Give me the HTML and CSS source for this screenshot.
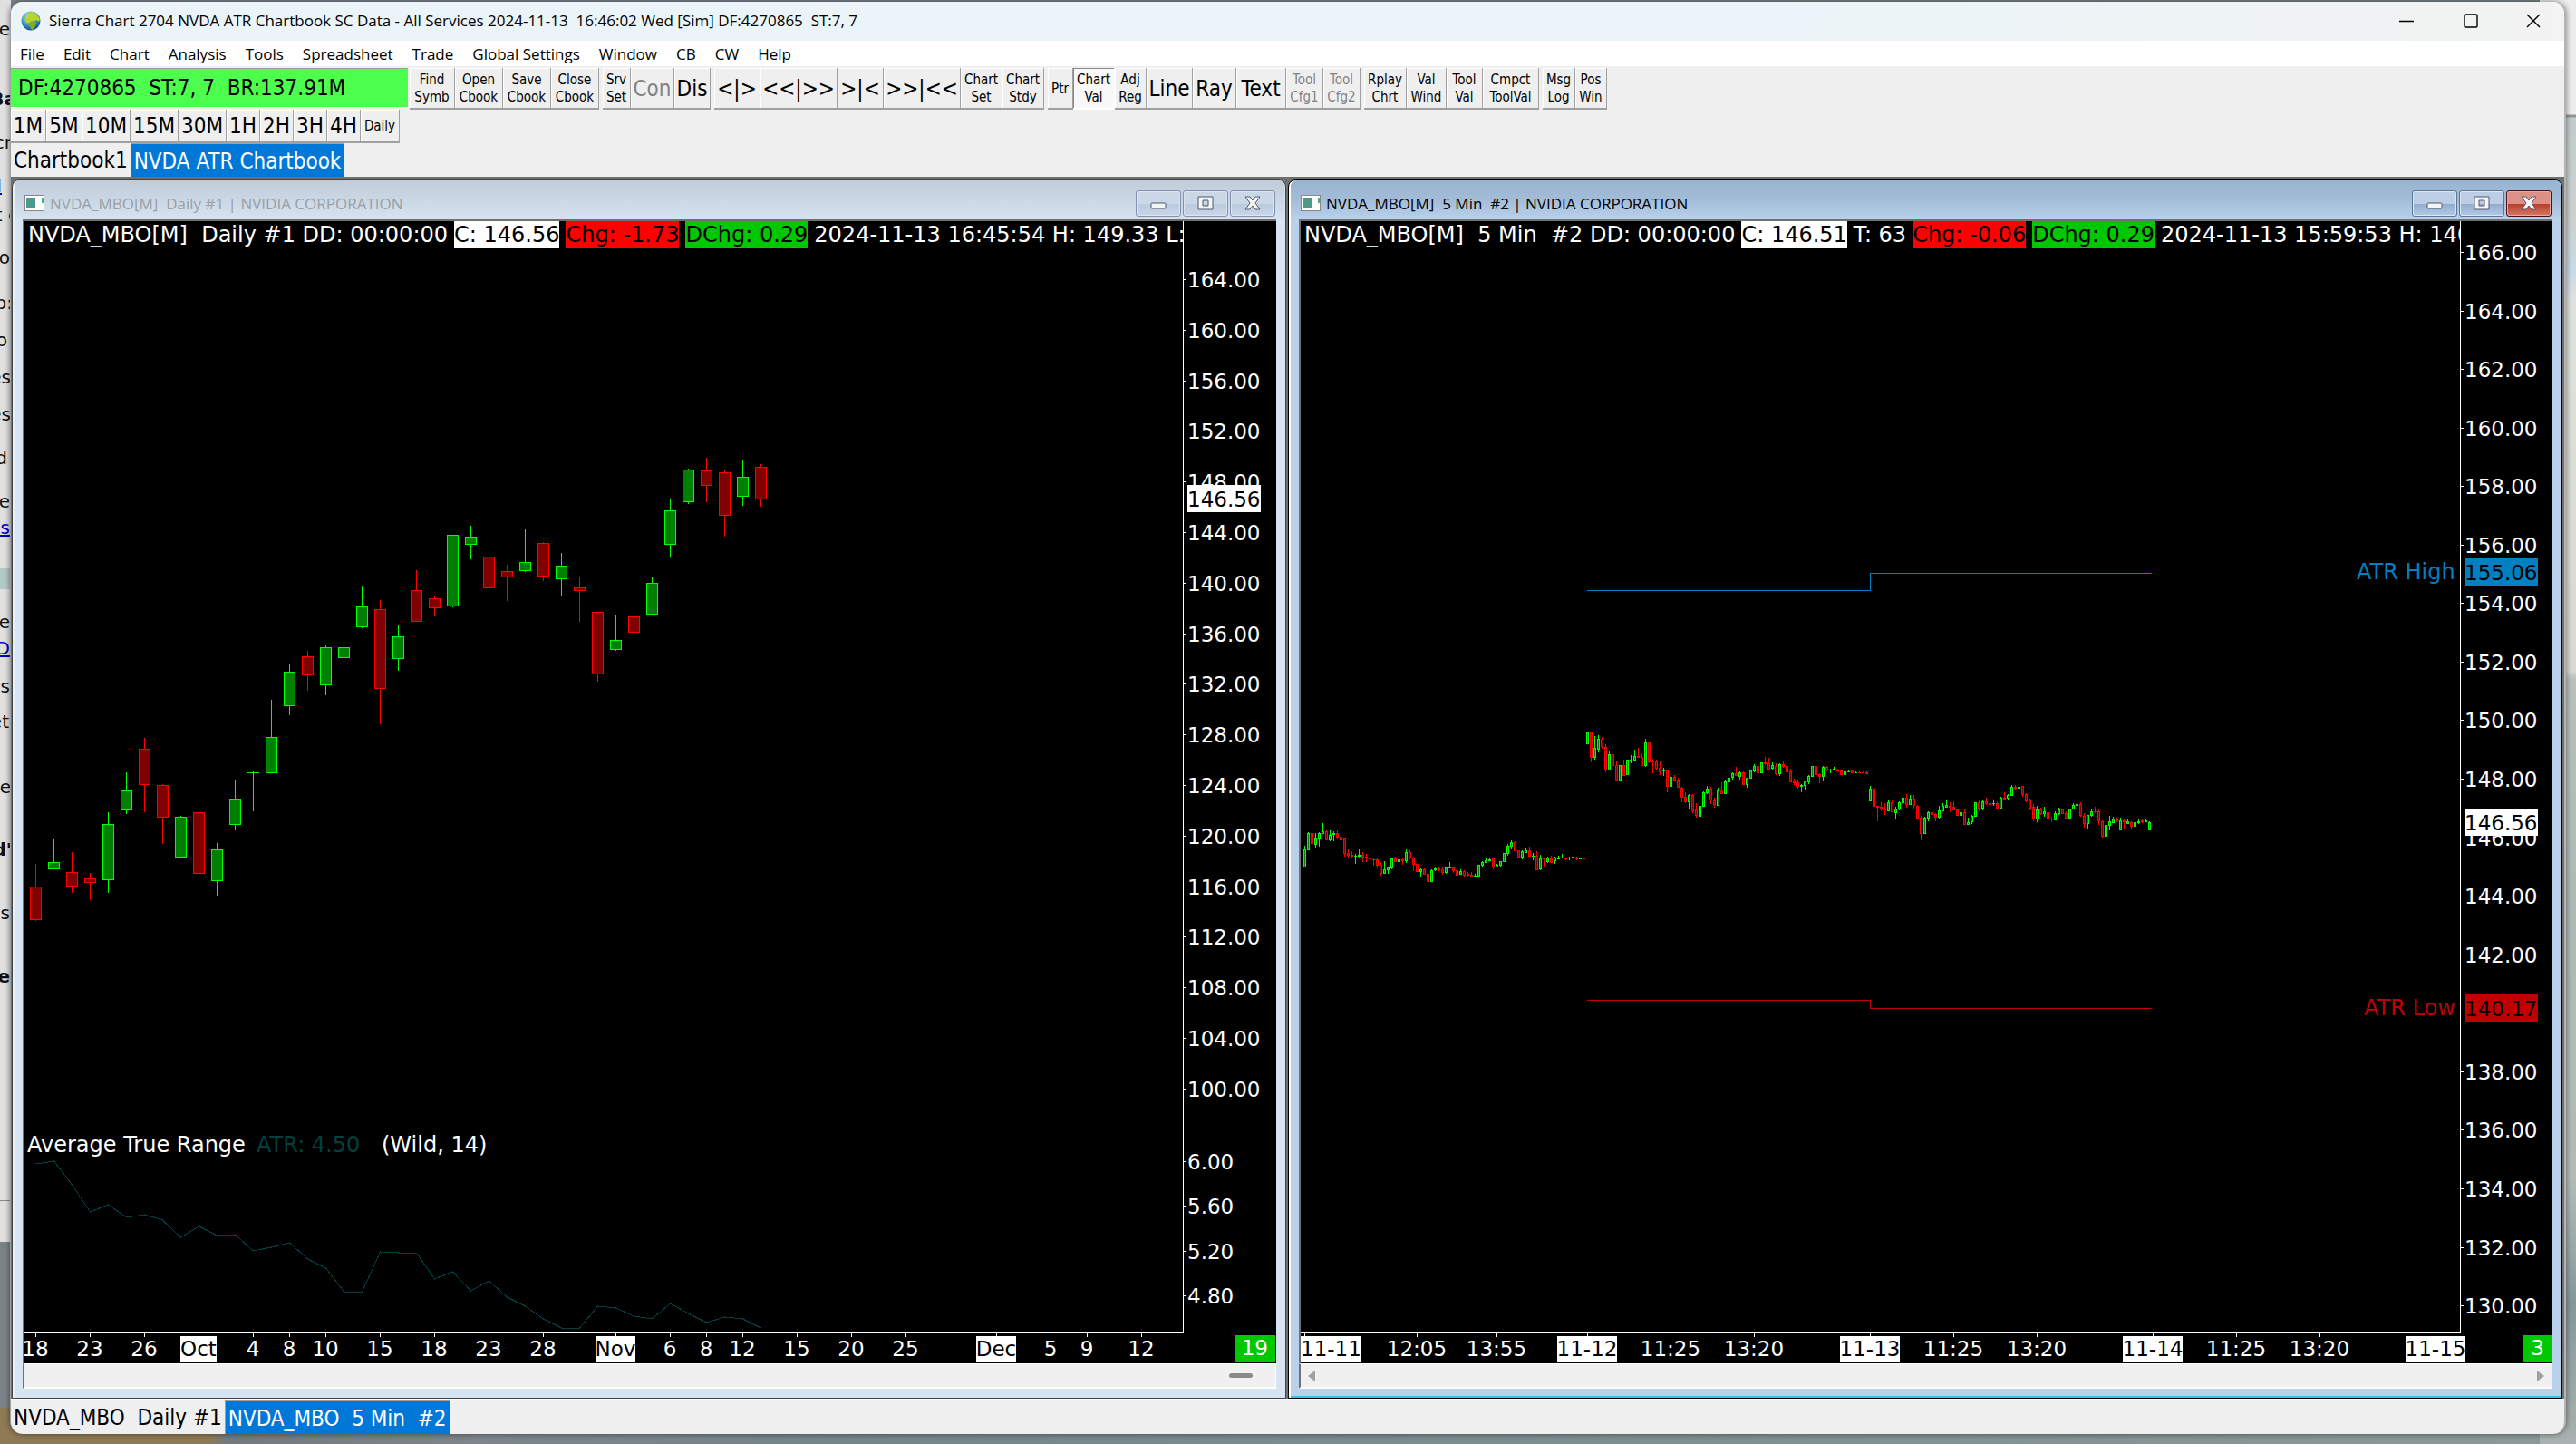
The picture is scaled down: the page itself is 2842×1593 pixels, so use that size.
FILE: index.html
```html
<!DOCTYPE html>
<html lang="en">
<head>
    <meta charset="utf-8">
    <title>Sierra Chart 2704 NVDA ATR Chartbook</title>
    <link rel="stylesheet" href="styles.css">
</head>
<body>
    <!-- what is visible of the desktop around the window -->
    <svg class="desktop" aria-hidden="true">
        <rect class="page-behind" width="12" height="1370"/>
        <rect class="band" y="627" width="12" height="23"/>
        <rect class="rule" y="1324" width="12" height="1"/>
        <g class="page-text" text-anchor="end">
            <text x="11" y="39">ple</text>
            <text x="18" y="116" class="bold">Ba</text>
            <text x="13" y="164">cr</text>
            <text x="2" y="212" class="link">d</text>
            <text x="20" y="244">t c</text>
            <text x="11" y="291">o</text>
            <text x="14" y="341">p:</text>
            <text x="8" y="382">o</text>
            <text x="12" y="423">es</text>
            <text x="12" y="464">es</text>
            <text x="8" y="512">d</text>
            <text x="11" y="560">fe</text>
            <text x="11" y="589" class="link">us</text>
            <text x="11" y="693">e</text>
            <text x="11" y="722" class="link">D</text>
            <text x="11" y="764">is</text>
            <text x="10" y="803">et</text>
            <text x="12" y="875">be</text>
            <text x="13" y="944" class="bold">d'</text>
            <text x="11" y="1014">is</text>
            <text x="11" y="1084" class="bold">e</text>
        </g>
    </svg>

    <div class="window">
        <header class="titlebar">
            <svg class="globe" width="22" height="22" viewBox="0 0 22 22">
                <defs>
                    <radialGradient id="sea" cx="40%" cy="30%" r="70%">
                        <stop offset="0" stop-color="#c9ecff"/>
                        <stop offset="0.5" stop-color="#4aa3dd"/>
                        <stop offset="1" stop-color="#124d8f"/>
                    </radialGradient>
                </defs>
                <circle cx="11" cy="11" r="10.5" fill="url(#sea)"/>
                <path d="M8 2l5-1 5 3 3 5-1 3-3-2-2 1-1 3-3 1-2-2-3 0-1-3 2-3z" fill="#b8d52c"/>
                <path d="M10 12l4-1 3 2-1 4-3 4-2-1-1-3-2-2z" fill="#7fae1e"/>
                <path d="M2 8l3-4 1 2-2 4z" fill="#9cc52b"/>
            </svg>
            <span class="title">Sierra Chart 2704 NVDA ATR Chartbook SC Data - All Services 2024-11-13  16:46:02 Wed [Sim] DF:4270865  ST:7, 7</span>
            <button class="caption" aria-label="Minimize"><svg width="16" height="16"><path d="M0 8.5h16"/></svg></button>
            <button class="caption" aria-label="Maximize"><svg width="16" height="16"><rect x="1" y="1" width="14" height="14" rx="1"/></svg></button>
            <button class="caption" aria-label="Close"><svg width="16" height="16"><path d="M1 1l14 14M15 1L1 15"/></svg></button>
        </header>

        <nav class="menu">
            <a href="#">File</a>
            <a href="#">Edit</a>
            <a href="#">Chart</a>
            <a href="#">Analysis</a>
            <a href="#">Tools</a>
            <a href="#">Spreadsheet</a>
            <a href="#">Trade</a>
            <a href="#">Global Settings</a>
            <a href="#">Window</a>
            <a href="#">CB</a>
            <a href="#">CW</a>
            <a href="#">Help</a>
        </nav>

        <div class="toolbar">
            <div class="status">DF:4270865  ST:7, 7  BR:137.91M</div>
            <div class="group files">
                <button>Find<br>Symb</button><button>Open<br>Cbook</button><button>Save<br>Cbook</button><button>Close<br>Cbook</button>
            </div>
            <div class="group server">
                <button>Srv<br>Set</button><button class="big" disabled>Con</button><button class="big">Dis</button>
            </div>
            <div class="group spacing">
                <button class="big">&lt;|&gt;</button><button class="big">&lt;&lt;|&gt;&gt;</button><button class="big">&gt;|&lt;</button><button class="big">&gt;&gt;|&lt;&lt;</button><button>Chart<br>Set</button><button>Chart<br>Stdy</button>
            </div>
            <div class="group tools">
                <button>Ptr</button><button class="pressed">Chart<br>Val</button><button>Adj<br>Reg</button><button class="big">Line</button><button class="big">Ray</button><button class="big">Text</button><button disabled>Tool<br>Cfg1</button><button disabled>Tool<br>Cfg2</button>
            </div>
            <div class="group values">
                <button>Rplay<br>Chrt</button><button>Val<br>Wind</button><button>Tool<br>Val</button><button>Cmpct<br>ToolVal</button>
            </div>
            <div class="group logs">
                <button>Msg<br>Log</button><button>Pos<br>Win</button>
            </div>
        </div>

        <div class="group periods">
            <button class="big">1M</button><button class="big">5M</button><button class="big">10M</button><button class="big">15M</button><button class="big">30M</button><button class="big">1H</button><button class="big">2H</button><button class="big">3H</button><button class="big">4H</button><button>Daily</button>
        </div>

        <div class="tabs">
            <button>Chartbook1</button><button class="active">NVDA ATR Chartbook</button>
        </div>

        <main class="workspace">
            <!-- daily chart -->
            <section class="child">
                <header class="child-title">
                    <svg class="doc" width="22" height="18"><rect x="0.5" y="0.5" width="21" height="17"/><path d="M2 3h10v12H2z" fill="#4c9a8c"/><path d="M19 3h2v6h-2z" fill="#4fae7c"/></svg>
                    <h2>NVDA_MBO[M]  Daily #1 | NVIDIA CORPORATION</h2>
                    <button class="ctl" aria-label="Minimize"><svg width="18" height="18"><rect x="1" y="9" width="16" height="6" rx="1"/></svg></button>
                    <button class="ctl" aria-label="Restore"><svg width="18" height="18"><path fill-rule="evenodd" d="M1 2h16v14H1zM6 6v6h6V6z"/></svg></button>
                    <button class="ctl" aria-label="Close"><svg width="18" height="18"><path d="M1 2h5l3 4 3-4h5l-5 7 5 7h-5l-3-4-3 4H1l5-7z"/></svg></button>
                </header>
                <div class="chart">
                    <div class="plot">
                        <div class="readout"><span>NVDA_MBO[M]  Daily #1 DD: 00:00:00</span><span class="last">C: 146.56</span><span class="down">Chg: -1.73</span><span class="up">DChg: 0.29</span><span>2024-11-13 16:45:54 H: 149.33 L:</span></div>
                        <svg id="daily"></svg>
                    </div>
                    <svg class="prices" id="daily-prices"></svg>
                    <svg class="dates" id="daily-dates"></svg>
                    <span class="count">19</span>
                </div>
                <div class="scroll"><span class="thumb"></span></div>
            </section>

            <!-- 5 minute chart -->
            <section class="child front">
                <header class="child-title">
                    <svg class="doc" width="22" height="18"><rect x="0.5" y="0.5" width="21" height="17"/><path d="M2 3h10v12H2z" fill="#4c9a8c"/><path d="M19 3h2v6h-2z" fill="#4fae7c"/></svg>
                    <h2>NVDA_MBO[M]  5 Min  #2 | NVIDIA CORPORATION</h2>
                    <button class="ctl" aria-label="Minimize"><svg width="18" height="18"><rect x="1" y="9" width="16" height="6" rx="1"/></svg></button>
                    <button class="ctl" aria-label="Restore"><svg width="18" height="18"><path fill-rule="evenodd" d="M1 2h16v14H1zM6 6v6h6V6z"/></svg></button>
                    <button class="ctl close" aria-label="Close"><svg width="18" height="18"><path d="M1 2h5l3 4 3-4h5l-5 7 5 7h-5l-3-4-3 4H1l5-7z"/></svg></button>
                </header>
                <div class="chart">
                    <div class="plot">
                        <div class="readout"><span>NVDA_MBO[M]  5 Min  #2 DD: 00:00:00</span><span class="last">C: 146.51</span><span>T: 63</span><span class="down">Chg: -0.06</span><span class="up">DChg: 0.29</span><span>2024-11-13 15:59:53 H: 146.56</span></div>
                        <svg id="intraday"></svg>
                    </div>
                    <svg class="prices" id="intraday-prices"></svg>
                    <svg class="dates" id="intraday-dates"></svg>
                    <span class="count">3</span>
                </div>
                <div class="scroll">
                    <svg width="8" height="12"><path d="M8 0v12L0 6z"/></svg>
                    <svg width="8" height="12"><path d="M0 0v12l8-6z"/></svg>
                </div>
            </section>
        </main>

        <footer class="tabs">
            <button>NVDA_MBO  Daily #1</button><button class="active">NVDA_MBO  5 Min  #2</button>
        </footer>
    </div>
    <script src="charts.js"></script>
</body>
</html>
```
FILE: styles.css
```css
/* general */
* {
    box-sizing: border-box;
}

body {
    margin: 0;
    height: 100vh;
    overflow: hidden;
    font-family: "DejaVu Sans Condensed", "DejaVu Sans", sans-serif;
    background:
        linear-gradient(#ededed 0 126px, #909694 127px 129px, #c3cbcc 130px, #cdd3d0 250px, #c9dae8 300px, #dfe1dc 330px, #d8d9d2 740px, #b9c0bd 750px, #aeb9b6 1000px, #b3bbb8 1300px, #86989a 1440px, #a9b2b0 1593px) right / 40px 100% no-repeat,
        linear-gradient(90deg, #8f7a55 0, #8f7a55 230px, #737a7d 250px, #7d868a 520px, #748689 900px, #8a9a98 2842px) bottom / 100% 40px no-repeat,
        #7a8387;
}

button {
    font: inherit;
    color: #000;
    padding: 0;
    border: 0;
    background: none;
    white-space: pre;
}

/* desktop behind the window */
.desktop {
    position: absolute;
    left: 0;
    top: 0;
    width: 100%;
    height: 100%;
}

.page-behind { fill: #e0e0e0; }
.band { fill: #b2cac6; }
.rule { fill: #8a8a8a; }

.page-text {
    font: 20px "DejaVu Sans", sans-serif;
    fill: #111;
}
.page-text .bold { font-weight: bold; }
.page-text .link { fill: #0000c8; text-decoration: underline; }

/* main window */
.window {
    position: relative;
    display: flex;
    flex-direction: column;
    height: calc(100vh - 13px);
    margin: 2px 11px 11px 11px;
    background: #efefef;
    border-left: 1px solid #a0a0a0;
    border-right: 2px solid #b4b4b4;
    border-radius: 14px;
    box-shadow: 0 0 6px rgba(0,0,0,0.5);
    overflow: hidden;
}

.titlebar {
    display: flex;
    align-items: center;
    height: 43px;
    padding: 0 0 2px 11px;
    background: linear-gradient(90deg, #ebf4f8 70%, #f2f3f2);
    font: 17px "Open Sans", sans-serif;
    white-space: pre;
}
.title {
    flex: 1;
    margin-left: 9px;
}
.caption {
    width: 71px;
    height: 41px;
}
.caption:last-child {
    width: 68px;
}
.caption svg {
    display: block;
    margin: 0 auto;
    fill: none;
    stroke: #000;
    stroke-width: 1.4;
}

.menu {
    display: flex;
    gap: 21px;
    height: 28px;
    padding-left: 10px;
    background: #fff;
    font: 17px/30px "Open Sans", sans-serif;
}
.menu a {
    color: #000;
    text-decoration: none;
}

/* toolbars */
.toolbar {
    display: flex;
    gap: 4px;
    height: 48px;
    padding-top: 2px;
}

.status {
    width: 438px;
    height: 43px;
    margin-right: -2px;
    padding-left: 8px;
    background: #4dff4d;
    border-top: 1px solid #a0a0a0;
    font-size: 24px;
    line-height: 43px;
    white-space: pre;
}

.group {
    display: grid;
}
.group button {
    padding-top: 2px;
    border: solid #a0a0a0;
    border-width: 0 1px 2px 0;
    box-shadow: inset 1px 1px 0 #fff;
    font-size: 15px;
    line-height: 19px;
}
.group .big {
    font-size: 24px;
}
.group button:disabled {
    color: #838383;
}
.group .pressed {
    background: #f8f8f8;
    border-color: #fff;
    box-shadow: inset 1px 1px 0 #888;
}

.files { grid-template-columns: 50px 53px 53px 53px; }
.server { grid-template-columns: 31px 48px 40px; }
.spacing { grid-template-columns: 51px 85px 51px 85px 46px 46px; }
.tools { grid-template-columns: 28px 46px 35px 51px 48px 55px 41px 41px; }
.values { grid-template-columns: 47px 44px 40px 62px; }
.logs { grid-template-columns: 36px 35px; }
.periods {
    grid-template-columns: 39px 40px 53px 53px 53px 37px 37px 37px 37px 43px;
    height: 37px;
}

.tabs {
    display: flex;
    height: 37px;
    font-size: 24px;
}
.tabs button {
    height: 37px;
    padding: 1px 3px 0;
    border-right: 1px solid #a0a0a0;
}
.tabs .active {
    color: #fff;
    background: #0078d7;
    border: 0;
    border-top: 1px solid #a0a0a0;
}

/* chart windows */
.workspace {
    flex: 1;
    display: grid;
    grid-template-columns: 1fr 1fr;
    gap: 2px;
    min-height: 0;
    padding: 0 2px 0 1px;
    border-top: 3px solid #6e6e6e;
    border-bottom: 2px solid #fff;
    background: #707070;
}

.child {
    display: flex;
    flex-direction: column;
    min-width: 0;
    padding: 0 10px 10px 11px;
    border: 1px solid #444;
    border-radius: 8px 8px 0 0;
    background: #d7e4f2;
    box-shadow: inset 2px 1px 0 #e8f0f8;
}
.front {
    border-color: #000;
    background: #b9d1ea;
    box-shadow: inset 2px 1px 0 #fff, inset -1px -2px 0 #35c5e0;
}

.child-title {
    display: flex;
    align-items: center;
    gap: 2px;
    height: 43px;
    margin: 0 -9px;
    padding: 7px 10px 0 11px;
    background: linear-gradient(#bfccda, #d5e2f0);
    border-radius: 6px 6px 0 0;
    color: #9a9fa6;
}
.front .child-title {
    background: linear-gradient(#99b4d1, #a3bcd8 50%, #b9d1ea);
    color: #000;
}
.child-title h2 {
    flex: 1;
    margin: 0 0 0 4px;
    font: 17px "Open Sans", sans-serif;
    white-space: pre;
}
.doc rect {
    fill: #fff;
    stroke: #888;
}
.ctl {
    width: 50px;
    height: 29px;
    border: 1px solid #8391b0;
    border-radius: 3px;
    background: linear-gradient(#c9d7e7 50%, #bac9dc 50%, #c8d6e8);
    box-shadow: inset 0 0 0 1px #dce6f1;
}
.ctl svg {
    display: block;
    margin: 0 auto;
    fill: #f5f5f5;
    stroke: #4f5a70;
}
.front .ctl {
    border-color: #5d7599;
    background: linear-gradient(#bbcee6 50%, #91abcc 50%, #b3cae5);
}
.front .close {
    border-color: #4c1018;
    background: linear-gradient(#dd9085 50%, #b83b25 50%, #d47766);
    box-shadow: inset 0 0 0 1px #e7a89d;
}

.chart {
    flex: 1;
    display: grid;
    grid-template: 1fr 34px / 1fr 102px;
    min-height: 0;
    position: relative;
    background: #000;
    border: solid #707070;
    border-width: 2px 0 0 2px;
    color: #fff;
    font: 23px "DejaVu Sans", sans-serif;
}
.front .chart {
    grid-template-columns: 1fr 101px;
}
.chart svg {
    width: 100%;
    height: 100%;
    display: block;
}
.chart text {
    fill: #fff;
    white-space: pre;
}

.plot {
    position: relative;
    min-width: 0;
    min-height: 0;
    overflow: hidden;
    border: solid #fff;
    border-width: 0 1px 1px 0;
    font-size: 24px;
}
.readout {
    position: absolute;
    left: 4px;
    top: 0;
    display: flex;
    gap: 7px;
    line-height: 30px;
    white-space: pre;
}
.last { background: #fff; color: #000; }
.down { background: #f00; color: #000; }
.up { background: #00c800; color: #000; }

.dates {
    grid-column: 1 / 3;
}
.count {
    position: absolute;
    right: 1px;
    bottom: 2px;
    padding: 0 8px;
    background: #00c800;
    line-height: 29px;
}

.scroll {
    display: flex;
    justify-content: space-between;
    align-items: center;
    height: 28px;
    padding: 0 8px;
    background: #f0f0f0;
    border: solid #fff;
    border-left: 2px solid #707070;
    border-width: 1px 1px 2px 2px;
    fill: #a0a0a0;
}
.thumb {
    width: 26px;
    height: 5px;
    margin: 0 17px 0 auto;
    border-radius: 3px;
    background: #8a8a8a;
}

/* chart drawing */
.gr { fill: #008000; stroke: #00ff00; }
.rd { fill: #800000; stroke: #ff0000; }
#daily, #intraday, .dates, .prices { shape-rendering: crispEdges; }
.tick { stroke: #fff; }
.atr { fill: none; stroke: #004040; }
.high { fill: none; stroke: #0080c0; }
.low { fill: none; stroke: #c00000; }
.chart .high-text { fill: #0080c0; }
.chart .low-text { fill: #c00000; }
.chart .atr-text { fill: #004040; }
.chart .black { fill: #000; }
```
FILE: charts.js
```js
// Bars are [up, high, body top, body bottom, low], y measured from TOP
var TOP_DAILY = 236;
var TOP_INTRADAY = 536;

var daily = [
    [0,473,498,535,536],[1,446,471,479,479],[0,460,482,498,505],[0,483,489,494,513],[1,416,429,491,505],
    [1,372,392,414,418],[0,334,346,386,416],[0,385,386,422,451],[1,420,421,466,467],[0,407,416,484,500],
    [1,450,457,492,509],[1,380,401,430,436],[1,371,372,373,415],[1,292,333,373,373],[1,253,261,299,309],
    [0,238,244,265,282],[1,232,234,276,287],[1,221,234,246,250],[1,167,189,212,213],[0,182,192,280,319],
    [1,209,222,247,260],[0,149,171,206,206],[0,177,180,191,200],[1,110,110,189,190],[1,100,112,121,137],
    [0,128,134,169,197],[0,143,150,157,183],[1,104,140,150,151],[0,118,119,156,161],[1,130,144,159,177],
    [0,157,168,172,206],[0,195,195,264,272],[1,199,226,237,238],[0,176,200,218,224],[1,157,163,198,199],
    [1,71,83,121,134],[1,37,38,74,76],[0,25,39,56,74],[0,38,41,89,112],[1,27,46,68,78],[0,32,35,71,79]
];

var intraday = [
    [1,153,157,177,177],[1,138,139,158,158],[0,137,139,151,155],[1,139,145,152,156],[1,138,139,146,154],
    [1,128,137,140,140],[0,136,137,147,147],[1,136,141,147,148],[1,137,139,141,148],[0,136,139,144,146],
    [0,139,143,147,147],[0,144,145,162,165],[0,157,161,164,166],[0,159,163,165,166],[1,162,164,165,173],
    [1,157,163,165,167],[0,160,163,166,171],[0,162,165,166,171],[0,158,166,168,168],[0,167,168,169,175],
    [0,167,168,175,178],[0,171,174,184,186],[1,170,179,184,184],[1,177,177,180,184],[1,166,167,178,179],
    [0,165,167,171,171],[1,167,168,171,174],[0,167,168,170,174],[1,157,160,170,172],[0,158,160,167,168],
    [0,165,166,174,181],[0,173,173,182,182],[1,178,179,182,187],[0,178,179,185,185],[0,181,184,193,193],
    [1,179,180,193,193],[1,177,178,180,181],[0,177,178,180,181],[0,176,179,183,185],[1,177,177,183,184],
    [1,171,177,178,178],[0,176,177,181,183],[0,177,180,186,186],[1,179,181,185,185],[0,180,181,186,187],
    [0,182,184,186,187],[0,182,185,188,188],[1,184,186,188,188],[1,174,174,187,188],[1,170,171,175,176],
    [1,167,169,172,172],[1,167,168,170,170],[0,167,167,177,179],[1,173,174,177,177],[1,170,170,175,177],
    [1,161,161,171,171],[1,151,153,162,164],[1,147,149,154,157],[0,148,149,159,159],[0,158,158,166,166],
    [1,158,159,166,168],[1,156,158,161,161],[0,154,158,165,165],[1,161,164,165,169],[0,159,164,180,180],
    [1,163,167,179,180],[0,166,167,168,176],[1,165,166,171,172],[0,164,167,172,172],[1,165,166,170,173],
    [1,164,166,168,168],[1,162,166,167,167],[0,166,166,168,169],[1,165,166,167,169],[1,165,165,166,166],
    [0,165,166,168,169],[1,166,166,168,168],[0,166,166,168,168],
    // 11-12
    [1,27,28,41,41],[0,27,27,56,61],[1,32,45,56,58],[1,31,35,47,50],[0,33,35,44,46],
    [0,41,44,70,72],[1,49,52,70,70],[0,52,52,65,65],[0,60,64,82,82],[1,64,64,82,82],
    [0,58,64,76,76],[1,58,58,75,75],[1,53,58,59,62],[1,47,54,59,59],[0,45,54,56,56],
    [0,51,55,65,65],[1,35,39,65,66],[0,39,39,61,62],[0,57,60,61,73],[0,58,60,68,69],
    [0,60,67,72,75],[1,67,70,71,76],[0,69,70,88,94],[1,76,77,88,88],[0,75,77,82,82],
    [0,78,81,89,89],[0,88,89,100,105],[0,94,99,105,106],[1,96,97,105,112],[0,96,97,115,117],
    [0,106,113,120,122],[1,108,109,121,125],[1,93,94,110,110],[1,87,90,95,96],[0,88,90,103,107],
    [0,100,103,108,111],[1,89,92,109,109],[0,83,91,96,96],[1,81,82,96,96],[1,76,78,83,85],
    [1,72,73,78,81],[0,66,73,76,76],[1,71,72,77,81],[0,71,72,86,86],[1,78,78,86,89],
    [1,69,70,79,79],[1,63,65,71,72],[0,61,65,73,73],[1,61,61,73,73],[0,55,61,63,64],
    [0,56,62,69,69],[1,61,64,68,69],[0,62,65,74,75],[1,62,63,74,76],[0,60,63,66,67],
    [0,62,65,72,74],[0,68,71,83,83],[0,79,82,84,86],[0,80,83,88,90],[1,85,86,88,94],
    [1,82,82,87,91],[1,75,76,83,85],[1,65,65,77,77],[0,62,65,75,76],[0,73,74,77,84],
    [1,65,66,77,82],[0,65,66,70,71],[1,68,69,70,73],[1,66,68,69,69],[0,68,70,71,71],
    [0,69,70,75,75],[1,71,71,75,75],[1,70,71,72,72],[0,70,70,73,73],[1,71,72,73,73],
    [0,71,72,73,73],[0,71,72,73,73],[0,71,72,74,74],
    // 11-13
    [1,87,90,104,104],[0,89,90,110,110],[0,109,109,111,126],[0,105,110,113,115],[0,106,113,114,119],
    [1,103,105,115,115],[0,103,105,116,116],[1,110,112,117,124],[1,104,105,113,114],[1,98,100,106,106],
    [0,96,100,108,111],[1,97,101,108,108],[0,97,101,109,112],[0,108,109,123,124],[0,120,122,140,147],
    [1,121,122,140,140],[1,115,116,123,126],[0,116,116,119,126],[0,117,118,122,126],[1,109,114,122,124],
    [1,106,109,115,115],[1,102,108,111,111],[0,105,109,111,116],[0,104,110,114,114],[0,112,113,120,120],
    [1,114,116,120,121],[0,113,116,130,130],[1,122,127,130,130],[1,119,120,127,129],[1,105,105,121,121],
    [0,102,105,112,115],[1,102,104,112,114],[0,100,104,107,108],[0,106,106,108,112],[1,103,106,107,109],
    [0,104,106,112,113],[1,99,100,112,112],[0,94,100,102,102],[1,96,97,101,103],[1,86,88,98,98],
    [0,86,88,90,91],[1,84,88,90,90],[0,87,87,97,99],[0,95,96,104,105],[0,101,103,112,114],
    [0,107,110,124,126],[1,109,113,124,127],[0,111,113,118,119],[1,110,115,118,121],[0,115,116,123,123],
    [0,121,123,124,127],[1,115,117,125,125],[1,111,113,118,119],[0,112,113,118,118],[0,115,117,123,123],
    [1,112,112,123,124],[1,106,108,113,113],[1,105,107,109,110],[0,105,107,120,121],[0,117,120,129,133],
    [1,119,119,129,134],[1,113,115,120,121],[0,110,115,116,117],[0,112,115,126,130],[0,125,126,143,144],
    [1,124,130,143,146],[1,120,126,131,136],[1,121,123,128,128],[0,122,123,125,127],[1,122,125,136,136],
    [0,124,125,127,134],[1,123,126,129,129],[0,126,127,132,134],[1,126,127,132,132],[1,124,126,128,129],
    [0,124,125,127,128],[1,124,125,127,127],[1,126,127,136,136]
];

var atr = [1040,1037,1063,1093,1085,1099,1096,1102,1121,1109,1119,1118,1136,1132,1127,1145,1155,1181,1181,1137,1138,
    1138,1167,1159,1180,1169,1187,1197,1211,1221,1221,1197,1199,1208,1211,1194,1205,1215,1209,1211,1221];

function add(svg, name, attrs, text) {
    var el = document.createElementNS("http://www.w3.org/2000/svg", name);
    for (var key in attrs) {
        el.setAttribute(key, attrs[key]);
    }
    if (text) {
        el.textContent = text;
    }
    svg.appendChild(el);
    return el;
}

// One bar every "step" pixels, "half" is half of the body width
function candles(svg, bars, top, first, step, half) {
    for (var i = 0; i < bars.length; i++) {
        var b = bars[i];
        var x = first + i * step + 0.5;
        var cls = b[0] ? "gr" : "rd";
        add(svg, "path", { "class": cls, d: "M" + x + " " + (top + b[1]) + "V" + (top + b[4]) });
        add(svg, "rect", {
            "class": cls, x: x - half, y: top + b[2] + 0.5,
            width: half * 2, height: Math.max(b[3] - b[2] - 1, 0.01)
        });
    }
}

// Labels down the price axis
function prices(svg, from, to, step, y0, dy, digits) {
    var n = 0;
    for (var p = from; p > to - 0.01; p -= step) {
        var y = Math.round(y0 + n * dy);
        add(svg, "path", { "class": "tick", d: "M0 " + (y + 0.5) + "h3" });
        add(svg, "text", { x: 4, y: y + 9 }, p.toFixed(digits));
        n++;
    }
}

function tag(svg, y, color, text) {
    add(svg, "rect", { x: 4, y: y - 15, width: 81, height: 30, fill: color });
    add(svg, "text", { "class": "black", x: 4, y: y + 9 }, text);
}

// Labels along the bottom, a leading * marks a new month or day
function dates(svg, list) {
    for (var i = 0; i < list.length; i++) {
        var x = list[i][0];
        var label = list[i][1];
        var mark = label.charAt(0) == "*";
        add(svg, "path", { "class": "tick", d: "M" + (x + 0.5) + " 0v5" });
        if (mark) {
            label = label.substring(1);
        }
        var t = add(svg, "text", { "class": mark ? "black" : "", x: x, y: 26, "text-anchor": "middle" }, label);
        var box = t.getBBox();
        if (box.x < -3) {
            t.setAttribute("text-anchor", "start");
            t.setAttribute("x", 0);
            box = t.getBBox();
        }
        if (mark) {
            var r = add(svg, "rect", { x: box.x, y: 4, width: box.width, height: 29, fill: "#fff" });
            svg.insertBefore(r, t);
        }
    }
}

var svg = document.getElementById("daily");
candles(svg, daily, TOP_DAILY, 12, 20, 6);
var line = "";
for (var i = 0; i < atr.length; i++) {
    line += (i ? "L" : "M") + (12.5 + i * 20) + " " + atr[i];
}
add(svg, "path", { "class": "atr", d: line });
add(svg, "text", { x: 3, y: 1027 }, "Average True Range");
add(svg, "text", { "class": "atr-text", x: 256, y: 1027 }, "ATR: 4.50");
add(svg, "text", { x: 394, y: 1027 }, "(Wild, 14)");

svg = document.getElementById("daily-prices");
prices(svg, 164, 100, 4, 64, 55.8, 2);
prices(svg, 6, 4.8, 0.4, 1037, 49.3, 2);
tag(svg, 306, "#fff", "146.56");

dates(document.getElementById("daily-dates"), [
    [12, "18"], [72, "23"], [132, "26"], [192, "*Oct"], [252, "4"], [292, "8"], [332, "10"], [392, "15"],
    [452, "18"], [512, "23"], [572, "28"], [652, "*Nov"], [712, "6"], [752, "8"], [792, "12"], [852, "15"],
    [912, "20"], [972, "25"], [1072, "*Dec"], [1132, "5"], [1172, "9"], [1232, "12"]
]);

svg = document.getElementById("intraday");
candles(svg, intraday, TOP_INTRADAY, 4, 4, 1);
add(svg, "path", { "class": "high", d: "M316 407.5H628.5V388.5H939" });
add(svg, "path", { "class": "low", d: "M316 859.5H628.5V868.5H939" });
add(svg, "text", { "class": "high-text", x: 1165, y: 395 }, "ATR High");
add(svg, "text", { "class": "low-text", x: 1173, y: 876 }, "ATR Low");

svg = document.getElementById("intraday-prices");
prices(svg, 166, 130, 2, 34, 64.56, 2);
tag(svg, 387, "#0080c0", "155.06");
tag(svg, 663, "#fff", "146.56");
tag(svg, 868, "#c00000", "140.17");

dates(document.getElementById("intraday-dates"), [
    [4, "*11-11"], [128, "12:05"], [216, "13:55"], [316, "*11-12"], [408, "11:25"], [500, "13:20"],
    [628, "*11-13"], [720, "11:25"], [812, "13:20"], [940, "*11-14"], [1032, "11:25"], [1124, "13:20"], [1252, "*11-15"]
]);
```
